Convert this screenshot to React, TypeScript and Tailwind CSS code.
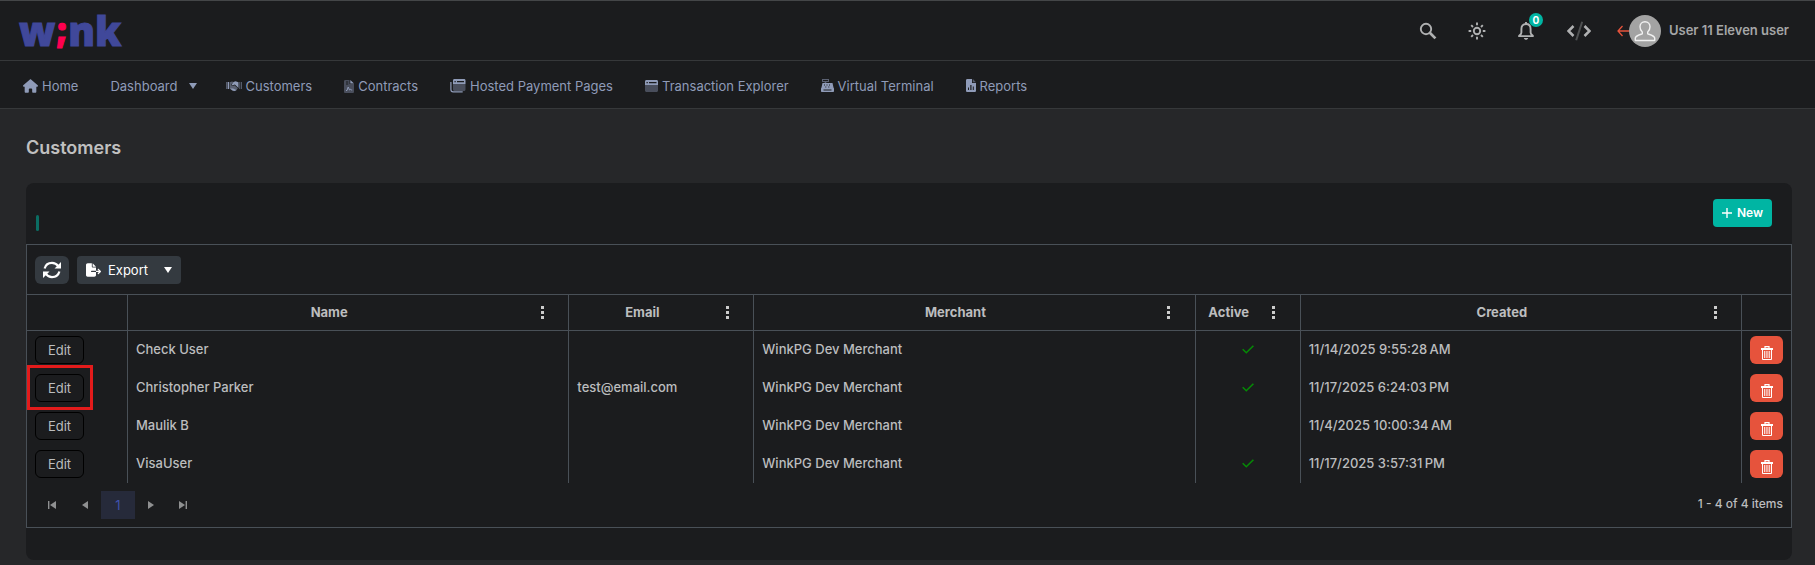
import React from 'react';
import { FaHouse, FaFileExport } from 'react-icons/fa6';

interface Customer {
  name: string;
  email: string;
  merchant: string;
  active: boolean;
  created: string;
  highlighted?: boolean;
}

const customers: Customer[] = [
  { name: 'Check User', email: '', merchant: 'WinkPG Dev Merchant', active: true, created: '11/14/2025 9:55:28\u202fAM' },
  { name: 'Christopher Parker', email: 'test@email.com', merchant: 'WinkPG Dev Merchant', active: true, created: '11/17/2025 6:24:03\u202fPM', highlighted: true },
  { name: 'Maulik B', email: '', merchant: 'WinkPG Dev Merchant', active: false, created: '11/4/2025 10:00:34\u202fAM' },
  { name: 'VisaUser', email: '', merchant: 'WinkPG Dev Merchant', active: true, created: '11/17/2025 3:57:31\u202fPM' },
];

const Logo = () => (
  <svg className="w-[100px] h-8 overflow-visible font-['Open_Sans',sans-serif] font-extrabold" viewBox="0 0 100 32" fontSize="40" strokeWidth="1">
    <text x="0" y="31" fill="#40489a" stroke="#40489a">
      w<tspan dy="-5" fill="#ff0050" stroke="#ff0050" fontSize="34" className="font-['Inter',sans-serif] font-black">;</tspan><tspan dy="5">nk</tspan>
    </text>
  </svg>
);

const HandshakeIcon = () => (
  <svg className="w-4 h-3" viewBox="0 0 16 12" fill="currentColor">
    <path d="M0 2h1v7H0zM15 2h1v7h-1z" opacity=".5" />
    <path d="M1.600 2H3v7H1.600z" />
    <path d="M13 2h1.400v7H13z" opacity=".4" />
    <path d="M3.500 2.200 6 1.500l1.500.6L5 4.600c.5 1.600 2.200 1.600 3.400.6l3.400 3-1.600 2.200-2.200.8-2.200-1-2.300-1.700z" opacity=".55" />
    <path d="m7.500 2 2-.8 3 1V8L8.800 4.500 7 5.300c-.8.200-1.400-.2-1.300-.8zM4 8.500l2.600 2 2 .5 1.800-.9L7 8.400z" />
  </svg>
);

const ContractIcon = () => (
  <svg className="w-[10px] h-[14px]" viewBox="0 0 10 14" fill="currentColor">
    <path fillRule="evenodd" d="M1.300 1H5.500v4H10v7.700c0 .7-.6 1.300-1.300 1.300H1.300C.6 14 0 13.400 0 12.700V2.300C0 1.600.6 1 1.300 1z" opacity=".4" />
    <path d="M6.300 1 10 4.500H6.300z" />
    <path d="M2 2.500h2.200v1H2zM2 4.500h2.200v1H2z" fill="#1b1c1e" />
    <path d="M2 11.500h1l1.200-3.500 1.300 3 1-.8.700.8h1" fill="none" stroke="currentColor" strokeWidth="1" />
  </svg>
);

const HostedIcon = () => (
  <svg className="w-4 h-[14px]" viewBox="0 0 16 14" fill="currentColor">
    <path d="M3 5h12.500v5.500c0 .8-.6 1.500-1.400 1.500H4.500C3.600 12 3 11.300 3 10.500z" opacity=".4" />
    <path fillRule="evenodd" d="M4.500 0h9.600c.8 0 1.400.6 1.400 1.400V5H3V1.400C3 .6 3.600 0 4.500 0zM4.500 2v1.200h1.200V2zM7 2v1.200h7V2z" />
    <path d="M.9 3v7.600c0 1.300.9 2.300 2.200 2.300h9.600" fill="none" stroke="currentColor" strokeWidth="1.200" />
  </svg>
);

const WindowIcon = () => (
  <svg className="w-[13px] h-3" viewBox="0 0 13 12" fill="currentColor">
    <path d="M0 5h13v5.500c0 .8-.7 1.500-1.500 1.500h-10C.7 12 0 11.300 0 10.500z" opacity=".4" />
    <path fillRule="evenodd" d="M1.500 0h10C12.300 0 13 .6 13 1.400V5H0V1.400C0 .6.700 0 1.500 0zM1.500 2v1.200h1.300V2zM4 2v1.200h7.500V2z" />
  </svg>
);

const RegisterIcon = () => (
  <svg className="w-[13px] h-[13px]" viewBox="0 0 13 13" fill="currentColor">
    <path fillRule="evenodd" d="M1 0h7v3H5.300v1.500H3.700V3H1zM2 1v1h5V1z" opacity=".55" />
    <path fillRule="evenodd" d="M1.500 4h10l1 4.500.5 1v2.500c0 .6-.4 1-1 1H1c-.6 0-1-.4-1-1V9.500l.5-1zM3 5.500v1h1v-1zM5.500 5.500v1h1v-1zM8 5.500v1h1v-1zM4.300 7.500v1h1v-1zM7.300 7.500v1h1v-1zM2.500 10.500v1h8v-1z" />
  </svg>
);

const ReportIcon = () => (
  <svg className="w-[10px] h-[13px]" viewBox="0 0 10 13" fill="currentColor">
    <path fillRule="evenodd" d="M1.300 0H6v4h4v7.700c0 .7-.6 1.300-1.300 1.300H1.300C.6 13 0 12.400 0 11.700V1.300C0 .6.600 0 1.300 0zM2 8.500V11h1V8.500zM4.300 6v5h1.200V6zM6.800 7.500V11h1V7.500z" />
    <path d="M6.800 0 10 3.300H6.800z" opacity=".5" />
  </svg>
);

const SearchIcon = () => (
  <svg className="w-[18px] h-[18px]" viewBox="0 0 18 18" fill="none" stroke="currentColor">
    <circle cx="7" cy="7" r="5.200" strokeWidth="1.900" />
    <path d="m10.800 10.800 5.600 5.600" strokeWidth="2.700" />
  </svg>
);

const SunIcon = () => (
  <svg className="w-[18px] h-[18px]" viewBox="0 0 18 18" fill="none" stroke="currentColor" strokeWidth="1.900">
    <circle cx="9" cy="9" r="3.200" />
    <path d="M9 .6v2.600M9 14.800v2.600M.6 9h2.600M14.800 9h2.600M3.200 3.200 5 5M13 13l1.800 1.800M3.200 14.800 5 13M13 5l1.800-1.800" />
  </svg>
);

const BellIcon = () => (
  <svg className="w-[18px] h-[20px]" viewBox="0 0 18 20" fill="none" stroke="currentColor" strokeWidth="1.900">
    <path d="M9 3C6 3 4.400 5.200 4.400 8v3.400c0 1.500-1.300 2.400-2.400 3.700h14c-1.100-1.300-2.400-2.200-2.400-3.700V8C13.600 5.200 12 3 9 3z" strokeLinejoin="round" />
    <path d="M6.800 17h4.400c-.3 1.200-1.200 1.800-2.200 1.800S7.100 18.200 6.800 17z" fill="currentColor" stroke="none" />
    <path d="M9 1v2" />
  </svg>
);

const CodeIcon = () => (
  <svg className="w-6 h-5" viewBox="0 0 24 20" fill="none" stroke="currentColor" strokeWidth="2.500">
    <path d="m6.500 5-5 5 5 5M17.500 5l5 5-5 5" />
    <path d="M15.200.8 9.200 19.200" strokeWidth="2" opacity=".35" />
  </svg>
);

const Avatar = () => (
  <svg className="w-8 h-8" viewBox="0 0 32 32">
    <circle cx="16" cy="16" r="16" fill="#a3a3a3" />
    <path
      d="M16 6.700c-3 0-5 2.200-5 5 0 2 .7 4 2.300 5.300v1.800c-3.500 1.200-6.800 2-7 4.200v2.500h19.400V23c-.2-2.200-3.500-3-7-4.200V17C20.300 15.700 21 13.700 21 11.700c0-2.800-2-5-5-5z"
      fill="none"
      stroke="#f1f1f1"
      strokeWidth="1.400"
      strokeLinejoin="round"
    />
  </svg>
);

const RefreshIcon = () => (
  <svg className="w-5 h-[18px]" viewBox="0 0 20 18" fill="none" stroke="currentColor" strokeWidth="2.200">
    <path d="M2.600 7.500C3.500 4.200 6.400 1.900 10 1.900c2.700 0 4.700 1.200 6.200 3.200M17.400 10.500c-.9 3.300-3.800 5.600-7.400 5.600-2.700 0-4.700-1.200-6.200-3.200" />
    <path d="M19 1v6.500h-6.500zM1 17v-6.500h6.500z" fill="currentColor" stroke="none" />
  </svg>
);

const TrashIcon = () => (
  <svg className="w-3 h-[14px]" viewBox="0 0 12 14" fill="none" stroke="currentColor">
    <path d="M4 2V.700h4V2" strokeWidth="1.200" />
    <path d="M0 3h12" strokeWidth="2" />
    <path d="M1.500 4v9.500h9V4" />
    <path d="M3.500 5v7M5.200 5v7M6.900 5v7M8.600 5v7" strokeWidth=".8" />
  </svg>
);

const CheckIcon = () => (
  <svg className="w-3 h-[9px]" viewBox="0 0 12 9" fill="none" stroke="#058a05" strokeWidth="1.600">
    <path d="m.700 4.200 3.600 3.500L11.400.8" />
  </svg>
);

const CaretDown = ({ className }: { className: string }) => (
  <svg className={className} viewBox="0 0 8 6" fill="currentColor">
    <path d="M0 0h8L4 6z" />
  </svg>
);

const NavItem = ({ icon, label }: { icon: React.ReactNode; label: string }) => (
  <a href="#" className="flex items-center gap-1 px-4">
    {icon}
    {label}
  </a>
);

const HeaderCell = ({ label }: { label: string }) => (
  <th className="p-0 border-r border-b border-t border-[#495057] font-bold">
    <div className="flex items-center">
      <span className="flex-1 text-center pb-0.5">{label}</span>
      <button type="button" aria-label={`${label} column menu`} className="w-6 h-6 mr-[14px] flex items-center justify-center">
        <svg className="w-[3px] h-[13px]" viewBox="0 0 3 13" fill="#cccccc">
          <path d="M0 0h3v3H0zM0 5h3v3H0zM0 10h3v3H0z" />
        </svg>
      </button>
    </div>
  </th>
);

const PagerArrow = ({ label, d, wide }: { label: string; d: string; wide?: boolean }) => (
  <button type="button" aria-label={label} className={wide ? 'w-[33px] h-7 flex items-center justify-center' : 'w-8 h-7 flex items-center justify-center'}>
    <svg className="w-2 h-2" viewBox="0 0 8 8" fill="#8f9091">
      <path d={d} />
    </svg>
  </button>
);

export default function App() {
  return (
    <div className="min-h-screen bg-[#262729] font-['Inter',sans-serif] text-[13px] leading-5 text-[#bcbdbe]">
      <header className="h-[61px] flex items-center justify-between pl-[19px] pr-[26px] bg-[#1b1c1e] border-t border-t-[#444648] border-b border-b-[#36383a]">
        <a href="#" aria-label="wink">
          <Logo />
        </a>
        <div className="flex items-center text-[#b0b1b2]">
          <button type="button" aria-label="Search" className="mr-[31px]"><SearchIcon /></button>
          <button type="button" aria-label="Theme" className="mr-[31px]"><SunIcon /></button>
          <button type="button" aria-label="Notifications" className="relative mr-8">
            <BellIcon />
            <span className="absolute -top-[8px] left-3 w-[14px] h-[14px] rounded-full bg-[#00b5a3] text-white text-[10px] leading-[14px] font-bold text-center">0</span>
          </button>
          <button type="button" aria-label="Developer" className="mr-[26px]"><CodeIcon /></button>
          <button type="button" className="flex items-center font-semibold text-[#a5a6a7]">
            <svg className="w-3 h-3" viewBox="0 0 12 12" fill="none" stroke="#e6533c" strokeWidth="1.300">
              <path d="M5.500 1 1 6l4.500 5M1 6h11" />
            </svg>
            <Avatar />
            <span className="ml-2 pb-0.5">User 11 Eleven user</span>
          </button>
        </div>
      </header>

      <nav className="h-12 flex items-center px-[7px] pt-0.5 bg-[#1b1c1e] border-b border-[#36383a] text-[#8f9bb8]">
        <NavItem icon={<FaHouse className="w-[15px] h-[14px]" />} label="Home" />
        <button type="button" className="flex items-center pl-4 pr-[13px]">
          Dashboard
          <CaretDown className="w-2 h-[6px] ml-[11px]" />
        </button>
        <NavItem icon={<HandshakeIcon />} label="Customers" />
        <NavItem icon={<ContractIcon />} label="Contracts" />
        <NavItem icon={<HostedIcon />} label="Hosted Payment Pages" />
        <NavItem icon={<WindowIcon />} label="Transaction Explorer" />
        <NavItem icon={<RegisterIcon />} label="Virtual Terminal" />
        <NavItem icon={<ReportIcon />} label="Reports" />
      </nav>

      <main className="pl-[26px] pr-[23px]">
        <h1 className="pt-[29px] pb-[25px] text-lg leading-5 font-semibold text-[#c0c0c0]">Customers</h1>

        <section className="rounded-lg bg-[#1b1c1e] pb-8">
          <div className="h-[61px] flex items-center justify-between pb-0.5 pl-[10px] pr-5">
            <span className="w-[3px] h-4 mt-5 rounded-xs bg-[#0b6d63]" />
            <button type="button" className="h-7 px-[9px] flex items-center gap-[5px] rounded bg-[#00b5a3] text-white text-xs font-semibold">
              <svg className="w-[10px] h-[10px]" viewBox="0 0 10 10" stroke="currentColor" strokeWidth="1.400">
                <path d="M5 0v10M0 5h10" />
              </svg>
              New
            </button>
          </div>

          <div className="border border-[#495057]">
            <div className="h-[49px] flex items-center gap-2 px-2 text-white">
              <button type="button" aria-label="Refresh" className="w-[34px] h-7 flex items-center justify-center rounded-md bg-[#343a40]">
                <RefreshIcon />
              </button>
              <button type="button" className="h-7 w-[104px] flex items-center pl-[9px] rounded bg-[#343a40]">
                <FaFileExport className="w-[15px] h-[14px]" />
                <span className="ml-[7px]">Export</span>
                <CaretDown className="w-2 h-[6px] ml-auto mr-[9px]" />
              </button>
            </div>

            <table className="w-full table-fixed border-separate border-spacing-0">
              <colgroup>
                <col className="w-[101px]" />
                <col />
                <col className="w-[185px]" />
                <col />
                <col className="w-[105px]" />
                <col />
                <col className="w-[49px]" />
              </colgroup>
              <thead>
                <tr className="h-[37px]">
                  <td className="border-r border-b border-t border-[#495057]" />
                  <HeaderCell label="Name" />
                  <HeaderCell label="Email" />
                  <HeaderCell label="Merchant" />
                  <HeaderCell label="Active" />
                  <HeaderCell label="Created" />
                  <td className="border-b border-t border-[#495057]" />
                </tr>
              </thead>
              <tbody className="font-medium">
                {customers.map((c) => (
                  <tr key={c.name} className="h-[38px]">
                    <td className="p-0 pl-2 border-r border-[#495057]">
                      <div className="relative w-[49px]">
                        <button type="button" className="block w-[49px] h-7 rounded-md border border-black font-normal">Edit</button>
                        {c.highlighted && (
                          <span className="absolute -top-[9px] -bottom-2 -left-2 -right-[9px] border-3 border-[#e31b1b] pointer-events-none" />
                        )}
                      </div>
                    </td>
                    <td className="p-0 pl-2 pb-0.5 border-r border-[#495057]">{c.name}</td>
                    <td className="p-0 pl-2 pb-0.5 border-r border-[#495057]">{c.email}</td>
                    <td className="p-0 pl-2 pb-0.5 border-r border-[#495057]">{c.merchant}</td>
                    <td className="p-0 pb-0.5 border-r border-[#495057]">
                      <div className="flex justify-center">{c.active && <CheckIcon />}</div>
                    </td>
                    <td className="p-0 pl-2 pb-0.5 border-r border-[#495057]">{c.created}</td>
                    <td className="p-0 pl-2">
                      <button type="button" aria-label={`Delete ${c.name}`} className="w-[33px] h-7 flex items-center justify-center pt-[6px] rounded-md bg-[#e6533c] text-white">
                        <TrashIcon />
                      </button>
                    </td>
                  </tr>
                ))}
              </tbody>
            </table>

            <div className="h-11 flex items-center px-2">
              <PagerArrow wide label="First page" d="M0 0h1.400v8H0zM8 0v8L2 4z" />
              <PagerArrow wide label="Previous page" d="M7 0v8L1 4z" />
              <button type="button" className="w-[34px] h-7 bg-[#262a3a] text-[#4052ad]">1</button>
              <PagerArrow label="Next page" d="M1 0v8l6-4z" />
              <PagerArrow label="Last page" d="M0 0v8l6-4zM6.600 0H8v8H6.600z" />
              <span className="ml-auto pb-0.5 text-xs font-medium">1 - 4 of 4 items</span>
            </div>
          </div>
        </section>
      </main>
    </div>
  );
}
